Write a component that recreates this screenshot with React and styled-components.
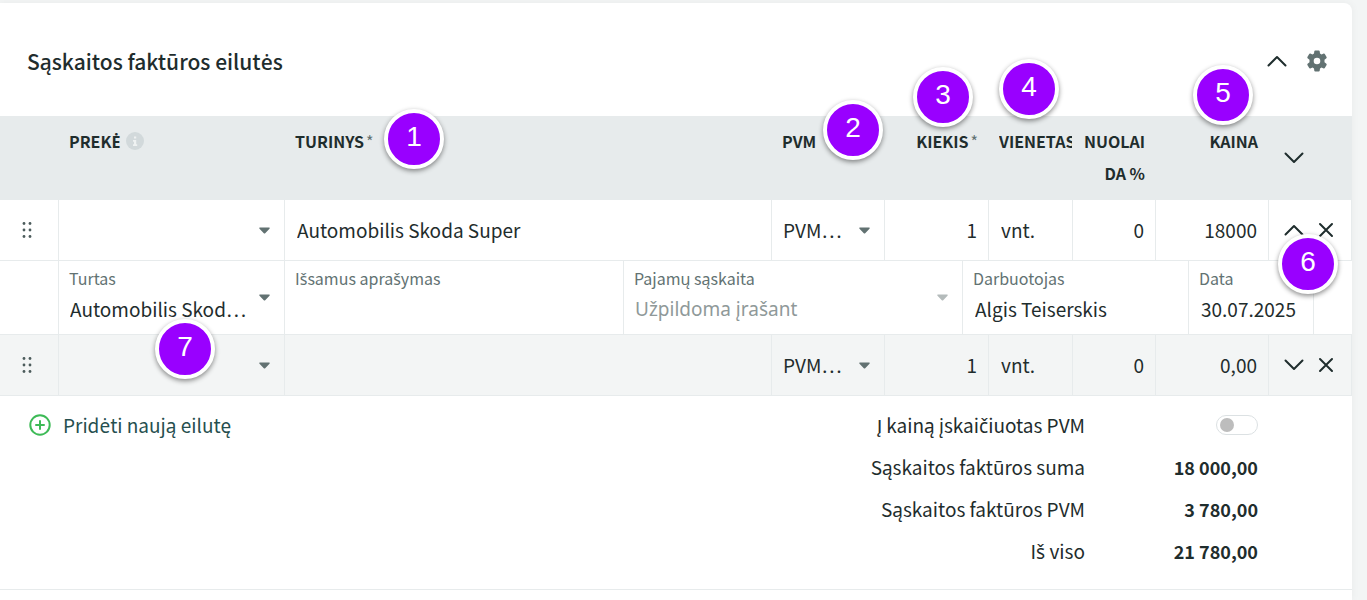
import React, { useState } from "react";
import styled, { createGlobalStyle } from "styled-components";

const GlobalStyle = createGlobalStyle`
  * {
    box-sizing: border-box;
  }
  body {
    margin: 0;
    background: #f3f5f5;
    color: #1f2d2d;
    font-family: "Noto Sans CJK KR", "Noto Sans", sans-serif;
    font-size: 19px;
    line-height: 28px;
  }
  button, input, select {
    font: inherit;
    color: inherit;
    margin: 0;
  }
`;

const initialLines = [
  { id: 1, content: "Automobilis Skoda Super", quantity: "1", unit: "vnt.", discount: "0", price: "18000", open: true },
  { id: 2, content: "", quantity: "1", unit: "vnt.", discount: "0", price: "0,00", open: false },
];

const totals = [
  { label: "Sąskaitos faktūros suma", value: "18 000,00" },
  { label: "Sąskaitos faktūros PVM", value: "3 780,00" },
  { label: "Iš viso", value: "21 780,00" },
];

const Text = ({ children }) => (
  <span>
    {children.split(/([ėĖščžĮ])/).map((part, i) =>
      i % 2 ? <Letter key={i} $plain={part === "Į"}>{part}</Letter> : part
    )}
  </span>
);

const Letter = styled.span`
  font-family: ${(props) => (props.$plain ? "Roboto" : '"Noto Sans"')}, sans-serif;
  line-height: 1;
`;

const Chevron = ({ up }) => (
  <svg width="20" height="12" viewBox="0 0 20 12" fill="none" stroke="#1f2d2d" strokeWidth="2" strokeLinecap="round" strokeLinejoin="round">
    <path d={up ? "M1.5 10.5 10 2l8.500 8.500" : "M1.500 1.500 10 10l8.500-8.500"} />
  </svg>
);

const Cross = () => (
  <svg width="16" height="16" viewBox="0 0 16 16" fill="none" stroke="#1f2d2d" strokeWidth="2" strokeLinecap="round">
    <path d="M2 2l12 12M14 2 2 14" />
  </svg>
);

const Caret = ({ muted }) => (
  <svg width="11" height="7" viewBox="0 0 11 7" fill={muted ? "#b4bbbb" : "#627272"}>
    <path d="M1 .5h9c.7 0 1 .7.500 1.200L6.200 6.200c-.4.400-1 .400-1.400 0L.5 1.700C0 1.200.3.500 1 .500z" />
  </svg>
);

const Grip = () => (
  <svg width="10" height="18" viewBox="0 0 10 18" fill="#4c5c5c">
    {[2.5, 9, 15.5].map((y) => (
      <g key={y}>
        <circle cx="2" cy={y} r="1.4" />
        <circle cx="8" cy={y} r="1.4" />
      </g>
    ))}
  </svg>
);

const Gear = () => (
  <svg width="22" height="22" viewBox="0 0 22 22" fill="#627272">
    <path
      fillRule="evenodd"
      d="M9.200.5h3.600c.5 0 .8.300.9.800l.3 2.300 1.500.9 2.200-.9c.4-.2.900 0 1.100.4l1.800 3.100c.2.400.1.900-.2 1.200l-1.900 1.500v2.400l1.900 1.500c.3.300.4.800.2 1.200l-1.800 3.100c-.2.400-.7.600-1.100.4l-2.200-.9-1.500.9-.3 2.300c-.1.500-.4.800-.9.800H9.200c-.5 0-.8-.3-.9-.8L8 18.400l-1.500-.9-2.200.9c-.4.200-.9 0-1.100-.4l-1.800-3.100c-.2-.4-.1-.9.200-1.200l1.900-1.500V9.800L1.600 8.300c-.3-.3-.4-.8-.2-1.200L3.200 4c.2-.4.700-.6 1.100-.4l2.200.9L8 3.600l.3-2.300c.1-.5.400-.8.900-.8zM11 7.700a3.300 3.300 0 1 0 0 6.600 3.300 3.300 0 0 0 0-6.600z"
    />
  </svg>
);

const Info = () => (
  <svg width="18" height="18" viewBox="0 0 18 18">
    <circle cx="9" cy="9" r="9" fill="#d2d9db" />
    <path d="M8 4.500h2.200v2H8zM7 8h3.200v4.200h1V14H7v-1.800h1V9.700H7z" fill="#eff2f2" />
  </svg>
);

const PlusCircle = () => (
  <svg width="22" height="22" viewBox="0 0 22 22" fill="none" stroke="#3dba56" strokeWidth="2" strokeLinecap="round">
    <circle cx="11" cy="11" r="9.700" />
    <path d="M11 7v8M7 11h8" />
  </svg>
);

const Dropdown = ({ label, value }) => (
  <SelectBox>
    <Select aria-label={label} defaultValue={value}>
      <option value={value}>{value}</option>
    </Select>
    <Caret />
  </SelectBox>
);

const Line = ({ line, onToggle, onRemove }) => (
  <>
    <LineRow $shaded={!line.open}>
      <GripCell>
        <IconButton aria-label="Perkelti">
          <Grip />
        </IconButton>
      </GripCell>
      <Cell>
        <Dropdown label="Prekė" value="" />
      </Cell>
      <Cell>
        <Input aria-label="Turinys" defaultValue={line.content} />
      </Cell>
      <Cell>
        <Dropdown label="PVM" value="PVM…" />
      </Cell>
      <Cell>
        <Input aria-label="Kiekis" defaultValue={line.quantity} $right />
      </Cell>
      <Cell>
        <Input aria-label="Vienetas" defaultValue={line.unit} />
      </Cell>
      <Cell>
        <Input aria-label="Nuolaida %" defaultValue={line.discount} $right />
      </Cell>
      <Cell>
        <Input aria-label="Kaina" defaultValue={line.price} $right />
      </Cell>
      <Cell>
        <Actions>
          <IconButton aria-label="Išskleisti" onClick={onToggle}>
            <Chevron up={line.open} />
          </IconButton>
          <IconButton aria-label="Pašalinti" onClick={onRemove}>
            <Cross />
          </IconButton>
          {line.id === 1 && <Badge $left={9} $top={20}>6</Badge>}
        </Actions>
      </Cell>
    </LineRow>
    {line.open && (
      <tr>
        <Cell />
        <DetailCell colSpan={8}>
          <Details>
            <Detail>
              <Field>
                <label htmlFor="asset">Turtas</label>
                <Select id="asset">
                  <option>Automobilis Skod…</option>
                </Select>
              </Field>
              <Caret />
              <Badge $left={96} $top={58}>7</Badge>
            </Detail>
            <Detail>
              <Field>
                <label htmlFor="description"><Text>Išsamus aprašymas</Text></label>
                <Input id="description" />
              </Field>
            </Detail>
            <Detail>
              <Field>
                <label htmlFor="account">Pajamų sąskaita</label>
                <Select id="account" $muted>
                  <option>Užpildoma įrašant</option>
                </Select>
              </Field>
              <Caret muted />
            </Detail>
            <Detail>
              <Field>
                <label htmlFor="employee">Darbuotojas</label>
                <Input id="employee" defaultValue="Algis Teiserskis" />
              </Field>
            </Detail>
            <Detail>
              <Field>
                <label htmlFor="date">Data</label>
                <Input id="date" defaultValue="30.07.2025" />
              </Field>
            </Detail>
          </Details>
        </DetailCell>
      </tr>
    )}
  </>
);

const App = () => {
  const [lines, setLines] = useState(initialLines);

  const toggleLine = (id) =>
    setLines(lines.map((line) => (line.id === id ? { ...line, open: !line.open } : line)));
  const removeLine = (id) => setLines(lines.filter((line) => line.id !== id));
  const addLine = () =>
    setLines([...lines, { ...initialLines[1], id: Date.now() }]);

  return (
    <>
      <GlobalStyle />
      <Card>
        <Heading>
          <h2><Text>Sąskaitos faktūros eilutės</Text></h2>
          <HeadingButton aria-label="Suskleisti">
            <Chevron up />
          </HeadingButton>
          <HeadingButton aria-label="Nustatymai">
            <Gear />
          </HeadingButton>
        </Heading>
        <Table>
          <colgroup>
            <Col $width={59} />
            <Col $width={226} />
            <Col />
            <Col $width={113} />
            <Col $width={104} />
            <Col $width={84} />
            <Col $width={83} />
            <Col $width={113} />
            <Col $width={83} />
          </colgroup>
          <thead>
            <tr>
              <HeadCell />
              <HeadCell>
                <HeadLabel $gap={6}><Text>PREKĖ</Text> <Info /></HeadLabel>
              </HeadCell>
              <HeadCell>
                <HeadLabel>TURINYS <Star>*</Star></HeadLabel>
                <Badge $left={99} $top={-7}>1</Badge>
              </HeadCell>
              <HeadCell>
                <HeadLabel>PVM</HeadLabel>
                <Badge $left={51} $top={-16}>2</Badge>
              </HeadCell>
              <HeadCell $right>
                <HeadLabel $right>KIEKIS <Star>*</Star></HeadLabel>
                <Badge $left={28} $top={-49}>3</Badge>
              </HeadCell>
              <HeadCell>
                <ClippedLabel>VIENETAS</ClippedLabel>
                <Badge $left={10} $top={-57}>4</Badge>
              </HeadCell>
              <HeadCell $right>NUOLAI<br />DA %</HeadCell>
              <HeadCell $right>
                KAINA
                <Badge $left={37} $top={-51}>5</Badge>
              </HeadCell>
              <HeadCell $flush>
                <Actions>
                  <IconButton aria-label="Išskleisti visas">
                    <Chevron />
                  </IconButton>
                </Actions>
              </HeadCell>
            </tr>
          </thead>
          <tbody>
            {lines.map((line) => (
              <Line
                key={line.id}
                line={line}
                onToggle={() => toggleLine(line.id)}
                onRemove={() => removeLine(line.id)}
              />
            ))}
          </tbody>
        </Table>
        <Footer>
          <AddButton onClick={addLine}>
            <PlusCircle />
            <Text>Pridėti naują eilutę</Text>
          </AddButton>
          <Totals>
            <TotalRow>
              <label htmlFor="vat"><Text>Į kainą įskaičiuotas PVM</Text></label>
              <TotalValue>
                <Toggle id="vat" type="checkbox" />
              </TotalValue>
            </TotalRow>
            {totals.map((total) => (
              <TotalRow key={total.label}>
                <Text>{total.label}</Text>
                <TotalValue>{total.value}</TotalValue>
              </TotalRow>
            ))}
          </Totals>
        </Footer>
      </Card>
    </>
  );
};

const Card = styled.section`
  min-height: calc(100vh - 3px);
  margin: 3px 15px 0 0;
  background: #fff;
  border-radius: 0 8px 0 0;
  box-shadow: 0 0 8px rgba(31, 45, 45, 0.05);
`;

const Heading = styled.header`
  display: flex;
  align-items: center;
  height: 113px;
  padding: 2px 15px 0 27px;
  h2 {
    flex: 1;
    margin: 0;
    font-size: 21px;
    font-weight: 500;
    line-height: 32px;
  }
`;

const IconButton = styled.button`
  display: inline-flex;
  align-items: center;
  justify-content: center;
  width: 32px;
  height: 32px;
  padding: 0;
  border: 0;
  background: none;
  cursor: pointer;
`;

const HeadingButton = styled(IconButton)`
  width: 40px;
  height: 40px;
`;

const Table = styled.table`
  width: 100%;
  table-layout: fixed;
  border-collapse: separate;
  border-spacing: 0;
`;

const Col = styled.col`
  width: ${(props) => (props.$width ? `${props.$width}px` : "auto")};
`;

const HeadCell = styled.th`
  position: relative;
  height: 84px;
  padding: ${(props) => (props.$flush ? "0" : "9px 11px 11px 10px")};
  background: #e7ebec;
  font-size: 16px;
  font-weight: 700;
  line-height: 32px;
  text-align: ${(props) => (props.$right ? "right" : "left")};
  vertical-align: ${(props) => (props.$flush ? "middle" : "top")};
  white-space: nowrap;
`;

const HeadLabel = styled.span`
  display: flex;
  align-items: center;
  justify-content: ${(props) => (props.$right ? "flex-end" : "flex-start")};
  gap: ${(props) => props.$gap || 2}px;
`;

const ClippedLabel = styled.span`
  display: block;
  margin-right: -10px;
  overflow: hidden;
`;

const Star = styled.span`
  color: #627272;
  font-weight: 400;
`;

const Badge = styled.span`
  position: absolute;
  z-index: 1;
  left: ${(props) => props.$left}px;
  top: ${(props) => props.$top}px;
  width: 60px;
  height: 60px;
  border: 4px solid #fff;
  border-radius: 50%;
  background: #90f;
  box-shadow: 0 2px 5px rgba(0, 0, 0, 0.45);
  color: #fff;
  font-family: "Liberation Sans", Arial, sans-serif;
  font-size: 28px;
  font-weight: 400;
  line-height: 48px;
  text-align: center;
`;

const LineRow = styled.tr`
  background: ${(props) => (props.$shaded ? "#f3f5f5" : "#fff")};
`;

const Cell = styled.td`
  height: 61px;
  padding: 0;
  border-right: 1px solid #e7ebec;
  border-bottom: 1px solid #e7ebec;
  vertical-align: middle;
`;

const GripCell = styled(Cell)`
  padding-left: 11px;
  ${IconButton} {
    vertical-align: middle;
  }
`;

const DetailCell = styled.td`
  padding: 0;
  border-bottom: 1px solid #e7ebec;
`;

const Input = styled.input`
  display: block;
  width: 100%;
  height: 30px;
  padding: 0 11px 2px 12px;
  border: 0;
  outline: 0;
  background: none;
  text-align: ${(props) => (props.$right ? "right" : "left")};
`;

const SelectBox = styled.div`
  display: flex;
  align-items: center;
  padding: 1px 14px 0 0;
`;

const Select = styled.select`
  display: block;
  flex: 1;
  min-width: 0;
  width: 100%;
  height: 30px;
  padding: 0 0 1px 11px;
  border: 0;
  outline: 0;
  appearance: none;
  background: none;
  color: ${(props) => (props.$muted ? "#8f9999" : "inherit")};
  font-family: ${(props) => (props.$muted ? '"Noto Sans", sans-serif' : "inherit")};
`;

const Actions = styled.div`
  position: relative;
  display: flex;
  padding-left: 9px;
`;

const Details = styled.div`
  display: grid;
  grid-template-columns: 226px 3fr 3fr 2fr 125px 38px;
`;

const Detail = styled.div`
  position: relative;
  display: flex;
  align-items: center;
  height: 73px;
  padding-right: 14px;
  border-right: 1px solid #e7ebec;
`;

const Field = styled.div`
  flex: 1;
  min-width: 0;
  padding-bottom: 3px;
  label {
    display: block;
    margin-bottom: 7px;
    padding-left: 10px;
    color: #627272;
    font-size: 16px;
    line-height: 20px;
  }
  input {
    padding-right: 0;
  }
`;

const Footer = styled.footer`
  display: flex;
  align-items: flex-start;
  justify-content: space-between;
  padding: 8px 94px 17px 29px;
  border-bottom: 1px solid #e7ebec;
`;

const AddButton = styled.button`
  display: flex;
  align-items: center;
  gap: 12px;
  height: 42px;
  padding: 0;
  border: 0;
  background: none;
  color: #264f4f;
  cursor: pointer;
`;

const Totals = styled.div`
  text-align: right;
`;

const TotalRow = styled.div`
  display: flex;
  align-items: center;
  justify-content: flex-end;
  height: 42px;
`;

const TotalValue = styled.span`
  display: flex;
  justify-content: flex-end;
  width: 173px;
  font-size: 18px;
  font-weight: 700;
`;

const Toggle = styled.input`
  appearance: none;
  display: flex;
  align-items: center;
  width: 42px;
  height: 20px;
  padding: 0 3px;
  border: 1px solid #dce1e3;
  border-radius: 10px;
  background: #fff;
  &::before {
    content: "";
    width: 14px;
    height: 14px;
    border-radius: 50%;
    background: #bdbdbd;
  }
  &:checked {
    justify-content: flex-end;
  }
`;

export default App;
